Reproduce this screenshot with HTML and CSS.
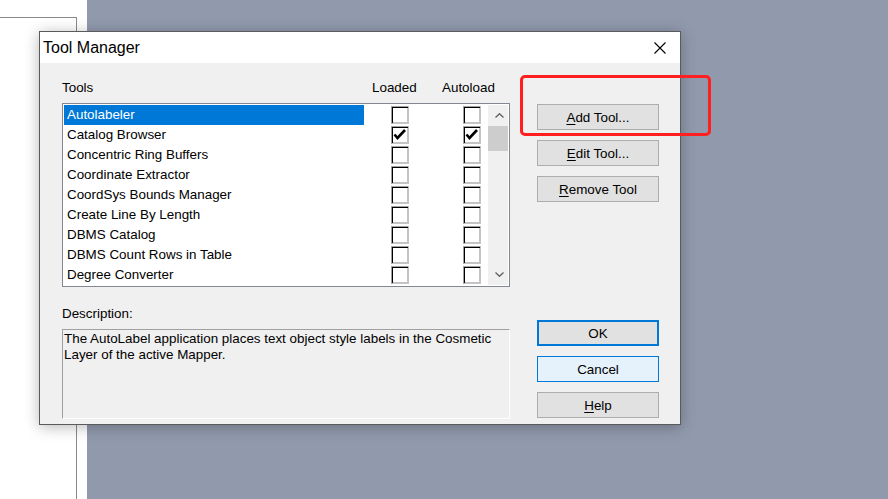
FILE: index.html
```html
<!DOCTYPE html>
<html lang="en">
<head>
    <meta charset="UTF-8">
    <title>Tool Manager</title>
    <link rel="stylesheet" href="styles.css">
</head>
<body>
    <div class="desktop">
        <div class="side">
            <div class="side-panel"></div>
        </div>
        <div class="gutter"></div>
        <div class="workspace"></div>
    </div>

    <div class="dialog">
        <div class="titlebar">
            <span class="title">Tool Manager</span>
            <svg class="close" width="12" height="12" viewBox="0 0 12 12">
                <path d="M0.5 0.5 L11.5 11.5 M11.5 0.5 L0.5 11.5" stroke="#000" stroke-width="1.1" fill="none"/>
            </svg>
        </div>

        <div class="dialog-body">
            <div class="main">
                <div class="list-head">
                    <span>Tools</span>
                    <span>Loaded</span>
                    <span>Autoload</span>
                </div>

                <div class="listbox">
                    <div class="rows">
                        <div class="row selected">
                            <div class="name">Autolabeler</div>
                            <div class="check"></div>
                            <div class="check second"></div>
                        </div>
                        <div class="row">
                            <div class="name">Catalog Browser</div>
                            <div class="check"><svg viewBox="0 0 16 16"><polyline points="2.5,7.5 5.5,11 13,3" /></svg></div>
                            <div class="check second"><svg viewBox="0 0 16 16"><polyline points="2.5,7.5 5.5,11 13,3" /></svg></div>
                        </div>
                        <div class="row">
                            <div class="name">Concentric Ring Buffers</div>
                            <div class="check"></div>
                            <div class="check second"></div>
                        </div>
                        <div class="row">
                            <div class="name">Coordinate Extractor</div>
                            <div class="check"></div>
                            <div class="check second"></div>
                        </div>
                        <div class="row">
                            <div class="name">CoordSys Bounds Manager</div>
                            <div class="check"></div>
                            <div class="check second"></div>
                        </div>
                        <div class="row">
                            <div class="name">Create Line By Length</div>
                            <div class="check"></div>
                            <div class="check second"></div>
                        </div>
                        <div class="row">
                            <div class="name">DBMS Catalog</div>
                            <div class="check"></div>
                            <div class="check second"></div>
                        </div>
                        <div class="row">
                            <div class="name">DBMS Count Rows in Table</div>
                            <div class="check"></div>
                            <div class="check second"></div>
                        </div>
                        <div class="row">
                            <div class="name">Degree Converter</div>
                            <div class="check"></div>
                            <div class="check second"></div>
                        </div>
                    </div>
                    <div class="scrollbar">
                        <div class="sb-btn">
                            <svg width="9" height="5" viewBox="0 0 9 5"><polyline points="0.5,4.5 4.5,0.7 8.5,4.5" /></svg>
                        </div>
                        <div class="sb-thumb"></div>
                        <div class="sb-track"></div>
                        <div class="sb-btn">
                            <svg width="9" height="5" viewBox="0 0 9 5"><polyline points="0.5,0.5 4.5,4.3 8.5,0.5" /></svg>
                        </div>
                    </div>
                </div>

                <div class="desc-label">Description:</div>
                <div class="desc-box">The AutoLabel application places text object style labels in the Cosmetic Layer of the active Mapper.</div>
            </div>

            <div class="actions">
                <div class="btn-group">
                    <button class="btn"><u>A</u>dd Tool...</button>
                    <button class="btn"><u>E</u>dit Tool...</button>
                    <button class="btn"><u>R</u>emove Tool</button>
                </div>
                <div class="btn-group bottom">
                    <button class="btn default">OK</button>
                    <button class="btn focused">Cancel</button>
                    <button class="btn"><u>H</u>elp</button>
                </div>
            </div>
        </div>
    </div>

    <div class="callout"></div>
</body>
</html>
```

FILE: styles.css
```css
html, body {
    margin: 0;
    height: 100%;
}

body {
    font-family: "Liberation Sans", Arial, sans-serif;
    font-size: 13.4px;
    color: #000;
    background-color: #fff;
    overflow: hidden;
}

/* background desktop */
.desktop {
    display: flex;
    height: 499px;
}

.side {
    width: 77px;
    padding-top: 17px;
    box-sizing: border-box;
}

.side-panel {
    height: 100%;
    border-top: 1px solid #8a8a8a;
    border-right: 1px solid #8a8a8a;
    background-color: #fff;
}

.gutter {
    width: 10px;
    background-color: #fff;
}

.workspace {
    flex: 1;
    background-color: #9199ad;
}

/* dialog window */
.dialog {
    position: absolute;
    left: 39px;
    top: 31px;
    width: 642px;
    height: 394px;
    box-sizing: border-box;
    border: 1px solid #5a5a5a;
    background-color: #f0f0f0;
    box-shadow: 0 2px 14px rgba(0, 0, 0, 0.28);
    display: flex;
    flex-direction: column;
}

.titlebar {
    height: 31px;
    background-color: #fff;
    display: flex;
    align-items: center;
    justify-content: space-between;
    padding: 0 14px 0 3px;
}

.title {
    font-size: 16px;
    line-height: 31px;
}

.close {
    display: block;
    margin-top: 1px;
}

.dialog-body {
    display: grid;
    grid-template-columns: 448px 122px;
    column-gap: 27px;
    padding: 16px 21px 0 22px;
}

.main {
    display: flex;
    flex-direction: column;
}

.list-head {
    display: grid;
    grid-template-columns: 310px 70px auto;
    line-height: 18px;
    margin-bottom: 6px;
}

.listbox {
    height: 184px;
    box-sizing: border-box;
    border: 1px solid #828790;
    background-color: #fff;
    padding: 1px;
    display: flex;
}

.rows {
    flex: 1;
}

.row {
    display: flex;
    align-items: center;
    height: 20px;
}

.name {
    width: 300px;
    height: 20px;
    line-height: 19px;
    padding-left: 3px;
    box-sizing: border-box;
    white-space: nowrap;
}

.row.selected .name {
    background-color: #0078d7;
    color: #fff;
}

.check {
    width: 18px;
    height: 18px;
    box-sizing: border-box;
    margin-left: 27px;
    border: 1px solid;
    border-color: #a0a0a0 #c4c4c4 #c4c4c4 #a0a0a0;
    box-shadow: inset 1px 1px 0 #000, inset -1px -1px 0 #c4c4c4;
    background-color: #fff;
}

.check.second {
    margin-left: 54px;
}

.check svg {
    display: block;
    width: 16px;
    height: 16px;
}

.check polyline {
    fill: none;
    stroke: #000;
    stroke-width: 2.6;
}

.scrollbar {
    width: 20px;
    background-color: #f0f0f0;
    display: flex;
    flex-direction: column;
}

.sb-btn {
    height: 21px;
    display: flex;
    align-items: center;
    justify-content: center;
}

.sb-btn svg {
    display: block;
    margin-left: 2px;
}

.sb-btn polyline {
    fill: none;
    stroke: #606060;
    stroke-width: 1.3;
}

.sb-thumb {
    height: 25px;
    background-color: #cdcdcd;
}

.sb-track {
    flex: 1;
}

.desc-label {
    margin-top: 19px;
    line-height: 16px;
    margin-bottom: 7px;
}

.desc-box {
    height: 90px;
    box-sizing: border-box;
    border: 1px solid;
    border-color: #a0a0a0 #fff #fff #a0a0a0;
    padding: 1px 1px 0;
    line-height: 16px;
}

/* buttons */
.actions {
    display: flex;
    flex-direction: column;
    padding-top: 25px;
}

.btn-group {
    display: flex;
    flex-direction: column;
    gap: 10px;
}

.btn-group.bottom {
    margin-top: 118px;
}

.btn {
    width: 122px;
    height: 26px;
    box-sizing: border-box;
    padding: 0;
    font-family: inherit;
    font-size: inherit;
    color: #000;
    background-color: #e1e1e1;
    border: 1px solid #adadad;
    border-radius: 0;
}

.btn u {
    text-underline-offset: 2px;
}

.btn.default {
    border: 2px solid #0078d7;
}

.btn.focused {
    background-color: #e5f1fb;
    border-color: #0078d7;
}

/* red annotation */
.callout {
    position: absolute;
    left: 520px;
    top: 75px;
    width: 191px;
    height: 61px;
    box-sizing: border-box;
    border: 3px solid #ff1f1f;
    border-radius: 5px;
}
```
